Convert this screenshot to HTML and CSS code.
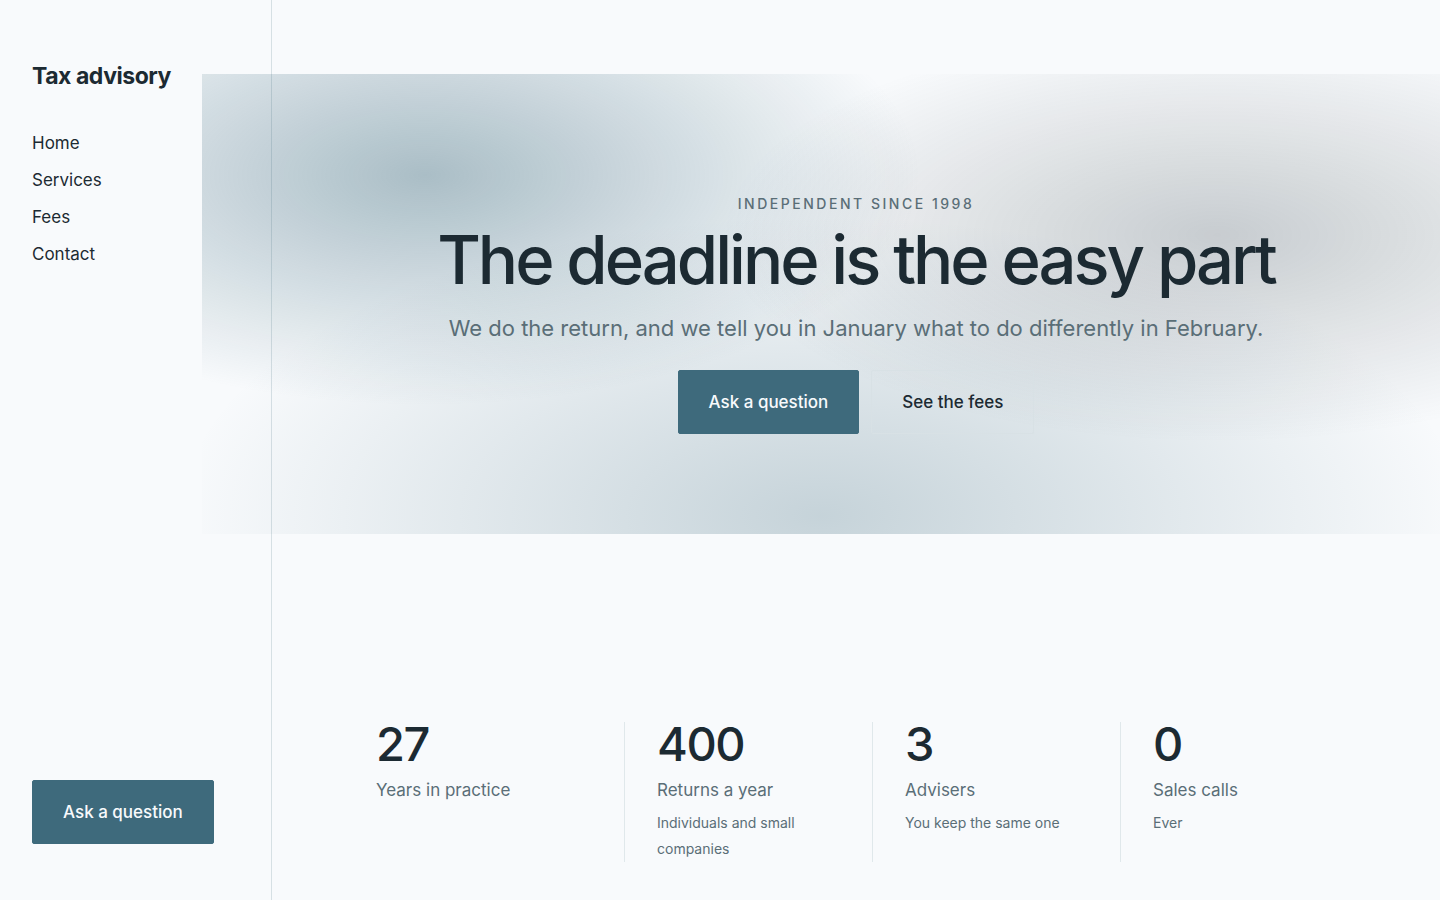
FILE: index.html
```
<!DOCTYPE html>
<html lang="en">
<head>
  <meta charset="UTF-8">
  <meta name="viewport" content="width=device-width, initial-scale=1.0">
  <title>Tax advisory</title>
  <link rel="stylesheet" href="styles.css">
</head>
<body>
  <!-- Sidebar -->
  <aside class="sidebar">
    <a class="brand" href="#">Tax advisory</a>
    <nav class="nav">
      <a href="#">Home</a>
      <a href="#services">Services</a>
      <a href="#fees">Fees</a>
      <a href="#contact">Contact</a>
    </nav>
    <button class="button button-primary" type="button">Ask a question</button>
  </aside>

  <main class="main">
    <!-- Hero -->
    <section class="hero">
      <p class="eyebrow">Independent since 1998</p>
      <h1>The deadline is the easy part</h1>
      <p class="lead">We do the return, and we tell you in January what to do differently in February.</p>
      <div class="actions">
        <button class="button button-primary" type="button">Ask a question</button>
        <button class="button button-outline" type="button">See the fees</button>
      </div>
    </section>

    <!-- Stats -->
    <section class="stats">
      <div class="stat">
        <p class="stat-value">27</p>
        <p class="stat-label">Years in practice</p>
      </div>
      <div class="stat">
        <p class="stat-value">400</p>
        <p class="stat-label">Returns a year</p>
        <p class="stat-note">Individuals and small companies</p>
      </div>
      <div class="stat">
        <p class="stat-value">3</p>
        <p class="stat-label">Advisers</p>
        <p class="stat-note">You keep the same one</p>
      </div>
      <div class="stat">
        <p class="stat-value">0</p>
        <p class="stat-label">Sales calls</p>
        <p class="stat-note">Ever</p>
      </div>
    </section>
  </main>
</body>
</html>
```
FILE: styles.css
```
/* General Styles */
* {
  box-sizing: border-box;
}

body {
  margin: 0;
  min-height: 100vh;
  display: grid;
  grid-template-columns: 272px 1fr;
  overflow-x: clip;
  background-color: #f8fafc;
  color: #1c2a32;
  font-family: Inter, "Liberation Sans", sans-serif;
  font-size: 17px;
  line-height: 28px;
}

h1,
p {
  margin: 0;
}

a {
  color: inherit;
  text-decoration: none;
}

/* Sidebar */
.sidebar {
  position: sticky;
  top: 0;
  height: 100vh;
  display: flex;
  flex-direction: column;
  align-items: flex-start;
  padding: 56px 32px;
  border-right: 1px solid rgba(62, 106, 124, 0.18);
}

.brand {
  font-size: 23px;
  font-weight: 700;
  line-height: 40px;
  letter-spacing: -0.02em;
}

.nav {
  display: flex;
  flex-direction: column;
  gap: 9px;
  margin-top: 33px;
}

.sidebar .button {
  margin-top: auto;
}

/* Buttons */
.button {
  height: 64px;
  padding: 0 30px;
  border: 1px solid transparent;
  border-radius: 2px;
  font: inherit;
  font-weight: 500;
  white-space: nowrap;
  cursor: pointer;
}

.button-primary {
  background-color: #3e6a7c;
  border-color: #3e6a7c;
  color: #f8fafc;
}

.button-outline {
  background-color: transparent;
  border-color: #d8e1e5;
  color: #1c2a32;
}

/* Hero */
.main {
  min-width: 0;
  padding-top: 98px;
}

.hero {
  position: relative;
  display: flex;
  flex-direction: column;
  align-items: center;
  padding: 92px 32px 76px;
  text-align: center;
}

.hero::before {
  content: "";
  position: absolute;
  inset: -24px 0 -24px -6%;
  z-index: -1;
  background:
    radial-gradient(ellipse 40% 50% at 18% 22%, rgba(62, 106, 124, 0.42), transparent),
    radial-gradient(ellipse 40% 45% at 82% 35%, rgba(28, 42, 50, 0.22), transparent),
    radial-gradient(ellipse 52% 65% at 50% 96%, rgba(62, 106, 124, 0.27), transparent);
}

.eyebrow {
  color: #5a6e77;
  font-size: 14px;
  font-weight: 500;
  letter-spacing: 0.18em;
  text-transform: uppercase;
}

h1 {
  margin-top: 4px;
  font-size: 67px;
  font-weight: 500;
  line-height: 76px;
  letter-spacing: -0.045em;
}

.lead {
  margin-top: 12px;
  color: #5a6e77;
  font-size: 22px;
  line-height: 36px;
}

.actions {
  display: flex;
  gap: 12px;
  margin-top: 24px;
}

/* Stats */
.stats {
  display: grid;
  grid-template-columns: repeat(4, 1fr);
  margin-top: 212px;
  padding: 0 72px 38px 104px;
}

.stat {
  padding-right: 32px;
}

.stat + .stat {
  padding-left: 32px;
  border-left: 1px solid #e0e8eb;
}

.stat-value {
  font-size: 47px;
  font-weight: 500;
  line-height: 44px;
  letter-spacing: -0.03em;
}

.stat-label {
  margin-top: 10px;
  color: #5a6e77;
}

.stat-note {
  margin-top: 6px;
  color: #5a6e77;
  font-size: 14px;
  line-height: 26px;
}
```
